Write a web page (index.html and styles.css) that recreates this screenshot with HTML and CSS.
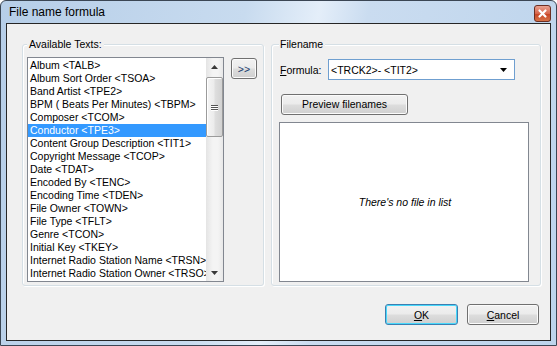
FILE: index.html
```html
<!DOCTYPE html>
<html>
<head>
<meta charset="utf-8">
<link rel="stylesheet" href="styles.css">
</head>
<body>
<div class="window">
  <div class="titlebar">
    <span class="title">File name formula</span>
    <span class="close">
      <svg width="17" height="17" viewBox="0 0 17 17">
        <defs>
          <linearGradient id="cg" x1="0" y1="0" x2="0" y2="1">
            <stop offset="0" stop-color="#eaa696"/>
            <stop offset="0.5" stop-color="#d7664c"/>
            <stop offset="0.51" stop-color="#c64223"/>
            <stop offset="1" stop-color="#d7764a"/>
          </linearGradient>
        </defs>
        <rect x="0.5" y="0.5" width="16" height="16" rx="2.5" fill="url(#cg)" stroke="#6b2f24"/>
        <path d="M5.5 5.5 L11.5 11.5 M11.5 5.5 L5.5 11.5" stroke="#fff" stroke-width="2.2" stroke-linecap="round"/>
      </svg>
    </span>
  </div>
  <div class="client">
    <div class="groups">
      <div class="group group-left">
        <span class="legend">Available Texts:</span>
        <div class="left-body">
          <div class="listbox">
            <ul class="items">
              <li>Album &lt;TALB&gt;</li>
              <li>Album Sort Order &lt;TSOA&gt;</li>
              <li>Band Artist &lt;TPE2&gt;</li>
              <li>BPM ( Beats Per Minutes) &lt;TBPM&gt;</li>
              <li>Composer &lt;TCOM&gt;</li>
              <li class="selected">Conductor &lt;TPE3&gt;</li>
              <li>Content Group Description &lt;TIT1&gt;</li>
              <li>Copyright Message &lt;TCOP&gt;</li>
              <li>Date &lt;TDAT&gt;</li>
              <li>Encoded By &lt;TENC&gt;</li>
              <li>Encoding Time &lt;TDEN&gt;</li>
              <li>File Owner &lt;TOWN&gt;</li>
              <li>File Type &lt;TFLT&gt;</li>
              <li>Genre &lt;TCON&gt;</li>
              <li>Initial Key &lt;TKEY&gt;</li>
              <li>Internet Radio Station Name &lt;TRSN&gt;</li>
              <li>Internet Radio Station Owner &lt;TRSO&gt;</li>
            </ul>
            <div class="vscroll">
              <div class="sb-btn">
                <svg width="7" height="4" viewBox="0 0 7 4"><path d="M0 4 L3.5 0 L7 4 Z" fill="#3a3a3a"/></svg>
              </div>
              <div class="thumb">
                <span class="grip"></span><span class="grip"></span><span class="grip"></span>
              </div>
              <div class="sb-btn sb-down">
                <svg width="7" height="4" viewBox="0 0 7 4"><path d="M0 0 L7 0 L3.5 4 Z" fill="#3a3a3a"/></svg>
              </div>
            </div>
          </div>
          <button class="btn btn-add">&gt;&gt;</button>
        </div>
      </div>
      <div class="group group-right">
        <span class="legend">Filename</span>
        <div class="form-row">
          <label class="form-label"><u>F</u>ormula:</label>
          <div class="combo">
            <span class="combo-text">&lt;TRCK2&gt;- &lt;TIT2&gt;</span>
            <svg class="combo-arrow" width="7" height="4" viewBox="0 0 7 4"><path d="M0 0 L7 0 L3.5 4 Z" fill="#000"/></svg>
          </div>
        </div>
        <button class="btn btn-preview">Preview filenames</button>
        <div class="preview-box"><i>There's no file in list</i></div>
      </div>
    </div>
    <div class="footer">
      <button class="btn btn-ok"><u>O</u>K</button>
      <button class="btn btn-cancel"><u>C</u>ancel</button>
    </div>
  </div>
</div>
</body>
</html>
```
FILE: styles.css
```css
* { box-sizing: border-box; }

html, body {
  margin: 0;
  padding: 0;
}

body {
  width: 557px;
  height: 346px;
  overflow: hidden;
  font-family: "Liberation Sans", Arial, sans-serif;
  font-size: 10.5px;
  color: #000;
  background: #fff;
}

.window {
  width: 557px;
  height: 346px;
  border: 1px solid #3b4654;
  border-radius: 6px 6px 0 0;
  background: linear-gradient(100deg, #b6cee8 0%, #c8dbef 40%, #e4eef9 52%, #cadcf0 60%, #bdd4ec 100%);
  display: flex;
  flex-direction: column;
  padding: 0 5px 4px 5px;
}

.titlebar {
  height: 22px;
  display: flex;
  justify-content: space-between;
  align-items: flex-start;
}

.title {
  font-size: 12px;
  line-height: 22px;
  margin-left: 3px;
  color: #000;
}

.close {
  width: 17px;
  height: 17px;
  margin-top: 4px;
  display: block;
}

.close svg { display: block; }

.client {
  width: 545px;
  height: 318px;
  border: 1px solid #262626;
  background: #f0f0f0;
  display: flex;
  flex-direction: column;
  padding: 20px 0 0 15px;
}

.groups {
  display: flex;
  gap: 7px;
  height: 242px;
}

.group {
  display: flex;
  flex-direction: column;
  align-items: flex-start;
  border: 1px solid #d5dfe5;
  border-radius: 3px;
  box-shadow: inset 1px 1px 0 #fff, 1px 1px 0 #fff;
}

.group-left {
  width: 242px;
  padding: 0 0 3px 4px;
}

.group-right {
  width: 270px;
  padding: 0 11px 3px 7px;
}

.legend {
  height: 13px;
  line-height: 13px;
  margin-top: -7px;
  padding: 0 2px;
  background: #f0f0f0;
  white-space: nowrap;
}

.group-right .legend {
  padding: 0 2px 0 1px;
}

.left-body {
  display: flex;
  gap: 7px;
  align-items: flex-start;
  margin-top: 6px;
}

.listbox {
  width: 197px;
  height: 225px;
  border: 1px solid #828790;
  background: #fff;
  display: flex;
}

.items {
  list-style: none;
  margin: 0;
  padding: 1px 0 0 0;
  flex: 1;
  overflow: hidden;
}

.items li {
  height: 13px;
  line-height: 13px;
  padding-left: 2px;
  white-space: nowrap;
  overflow: hidden;
}

.items li.selected {
  background: #3399ff;
  color: #fff;
}

.vscroll {
  width: 17px;
  display: flex;
  flex-direction: column;
  background: linear-gradient(to right, #e4e4e4, #f4f4f4 40%, #f4f4f4 70%, #e8e8e8);
}

.sb-btn {
  height: 17px;
  display: flex;
  align-items: center;
  justify-content: center;
}

.sb-btn svg { display: block; }

.sb-down { margin-top: auto; }

.thumb {
  height: 60px;
  margin: 2px 0 0 0;
  border: 1px solid #9b9b9b;
  border-radius: 2px;
  background: linear-gradient(to right, #f5f5f5, #ececec 45%, #dedede 55%, #d2d2d2);
  box-shadow: inset 1px 1px 0 #fff;
  display: flex;
  flex-direction: column;
  align-items: center;
  justify-content: center;
  gap: 1px;
}

.grip {
  display: block;
  width: 7px;
  height: 1px;
  background: #555;
  box-shadow: 0 1px 0 #fff;
}

.btn {
  font-family: "Liberation Sans", Arial, sans-serif;
  font-size: 10.5px;
  color: #000;
  height: 21px;
  padding: 0;
  border: 1px solid #707070;
  border-radius: 3px;
  background: linear-gradient(to bottom, #f2f2f2 0%, #ebebeb 48%, #dddddd 52%, #cfcfcf 100%);
  box-shadow: inset 0 0 0 1px #fbfbfb;
  display: flex;
  align-items: center;
  justify-content: center;
}

.btn-add {
  width: 26px;
  margin-top: 1px;
  color: #1a3c6e;
}

.form-row {
  display: flex;
  align-items: center;
  height: 21px;
  margin-top: 8px;
}

.form-label {
  width: 48px;
  margin-left: 1px;
}

.combo {
  width: 187px;
  height: 21px;
  border: 1px solid #6f9fd0;
  background: #fff;
  display: flex;
  align-items: center;
  justify-content: space-between;
  padding: 0 7px 0 2px;
}

.combo-arrow { display: block; }

.btn-preview {
  width: 127px;
  margin-top: 14px;
  margin-left: 2px;
}

.preview-box {
  width: 250px;
  height: 161px;
  margin-top: 7px;
  border: 1px solid #828790;
  background: #fff;
  display: flex;
  align-items: center;
  justify-content: center;
}

.preview-box i {
  font-style: italic;
  margin-left: 2px;
}

.footer {
  display: flex;
  justify-content: flex-end;
  gap: 9px;
  margin-top: 18px;
  padding-right: 11px;
}

.btn-ok {
  width: 73px;
  border-color: #3c7fb1;
  box-shadow: inset 0 0 0 1px #48d8fb;
}

.btn-cancel {
  width: 72px;
}
```
